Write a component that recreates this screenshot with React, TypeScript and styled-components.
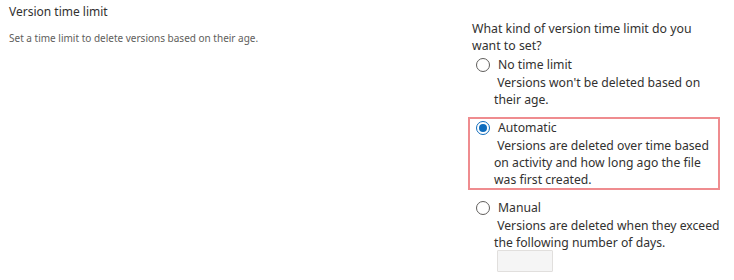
import React, { useState } from 'react';
import styled, { createGlobalStyle } from 'styled-components';

const GlobalStyle = createGlobalStyle`
  html, body {
    margin: 0;
    padding: 0;
    background: #ffffff;
  }
  body {
    font-family: 'Noto Sans', 'Open Sans', sans-serif;
    color: #323130;
  }
`;

type TOption = {
  key: string;
  label: string;
  description: string;
};

const options: TOption[] = [
  {
    key: 'none',
    label: 'No time limit',
    description: "Versions won't be deleted based on their age.",
  },
  {
    key: 'auto',
    label: 'Automatic',
    description:
      'Versions are deleted over time based on activity and how long ago the file was first created.',
  },
  {
    key: 'manual',
    label: 'Manual',
    description: 'Versions are deleted when they exceed the following number of days.',
  },
];

const App = () => {
  const [selected, setSelected] = useState('auto');

  return (
    <>
      <GlobalStyle />
      <Page>
        <InfoColumn>
          <SectionTitle>Version time limit</SectionTitle>
          <SectionHint>Set a time limit to delete versions based on their age.</SectionHint>
        </InfoColumn>
        <SettingsColumn>
          <Question>What kind of version time limit do you want to set?</Question>
          <OptionList>
            {options.map((opt) => (
              <Option key={opt.key} $active={selected === opt.key}>
                <HiddenRadio
                  type="radio"
                  name="timeLimit"
                  checked={selected === opt.key}
                  onChange={() => setSelected(opt.key)}
                />
                <RadioCircle $checked={selected === opt.key} />
                <OptionText>
                  <OptionLabel>{opt.label}</OptionLabel>
                  <OptionDescription>{'\u00a0' + opt.description}</OptionDescription>
                  {opt.key === 'manual' && <DaysInput />}
                </OptionText>
              </Option>
            ))}
          </OptionList>
        </SettingsColumn>
      </Page>
    </>
  );
};

export default App;

const Page = styled.div`
  display: flex;
  width: 734px;
  height: 280px;
  overflow: hidden;
`;

const InfoColumn = styled.div`
  width: 459px;
  padding: 4px 0 0 9px;
  box-sizing: border-box;
`;

const SectionTitle = styled.div`
  font-size: 12px;
  line-height: 16px;
  color: #323130;
`;

const SectionHint = styled.div`
  margin-top: 11px;
  font-size: 10px;
  line-height: 14px;
  color: #605e5c;
`;

const SettingsColumn = styled.div`
  display: flex;
  flex-direction: column;
  padding-top: 20px;
  padding-left: 9px;
`;

const Question = styled.div`
  width: 240px;
  padding-left: 4px;
  font-size: 12.3px;
  line-height: 17px;
`;

const OptionList = styled.div`
  display: flex;
  flex-direction: column;
  gap: 7px;
`;

const Option = styled.label<{ $active: boolean }>`
  display: flex;
  align-items: flex-start;
  width: 252px;
  box-sizing: border-box;
  padding: 0 0 0 6px;
  border: 2px solid ${({ $active }) => ($active ? '#ef8c8f' : 'transparent')};
  cursor: pointer;
`;

const HiddenRadio = styled.input`
  position: absolute;
  opacity: 0;
  width: 0;
  height: 0;
`;

const RadioCircle = styled.span<{ $checked: boolean }>`
  flex: none;
  position: relative;
  width: 14px;
  height: 14px;
  margin-top: 2px;
  margin-right: 4px;
  border-radius: 50%;
  box-sizing: border-box;
  border: 1px solid ${({ $checked }) => ($checked ? '#0f6cbd' : '#605e5c')};
  background: #ffffff;

  &::after {
    content: '';
    display: ${({ $checked }) => ($checked ? 'block' : 'none')};
    position: absolute;
    top: 2px;
    left: 2px;
    width: 8px;
    height: 8px;
    border-radius: 50%;
    background: #0f6cbd;
  }
`;

const OptionText = styled.div`
  flex: 1;
  margin-right: -6px;
  font-size: 12.2px;
  color: #323130;
`;

const OptionLabel = styled.div`
  padding-left: 4px;
  line-height: 18px;
`;

const OptionDescription = styled.div`
  line-height: 17px;
`;

const DaysInput = styled.input`
  display: block;
  width: 56px;
  height: 22px;
  box-sizing: border-box;
  margin: -1px 0 0 3px;
  border: 1px solid #e1dfdd;
  background: #f5f5f5;
  border-radius: 1px;
`;
